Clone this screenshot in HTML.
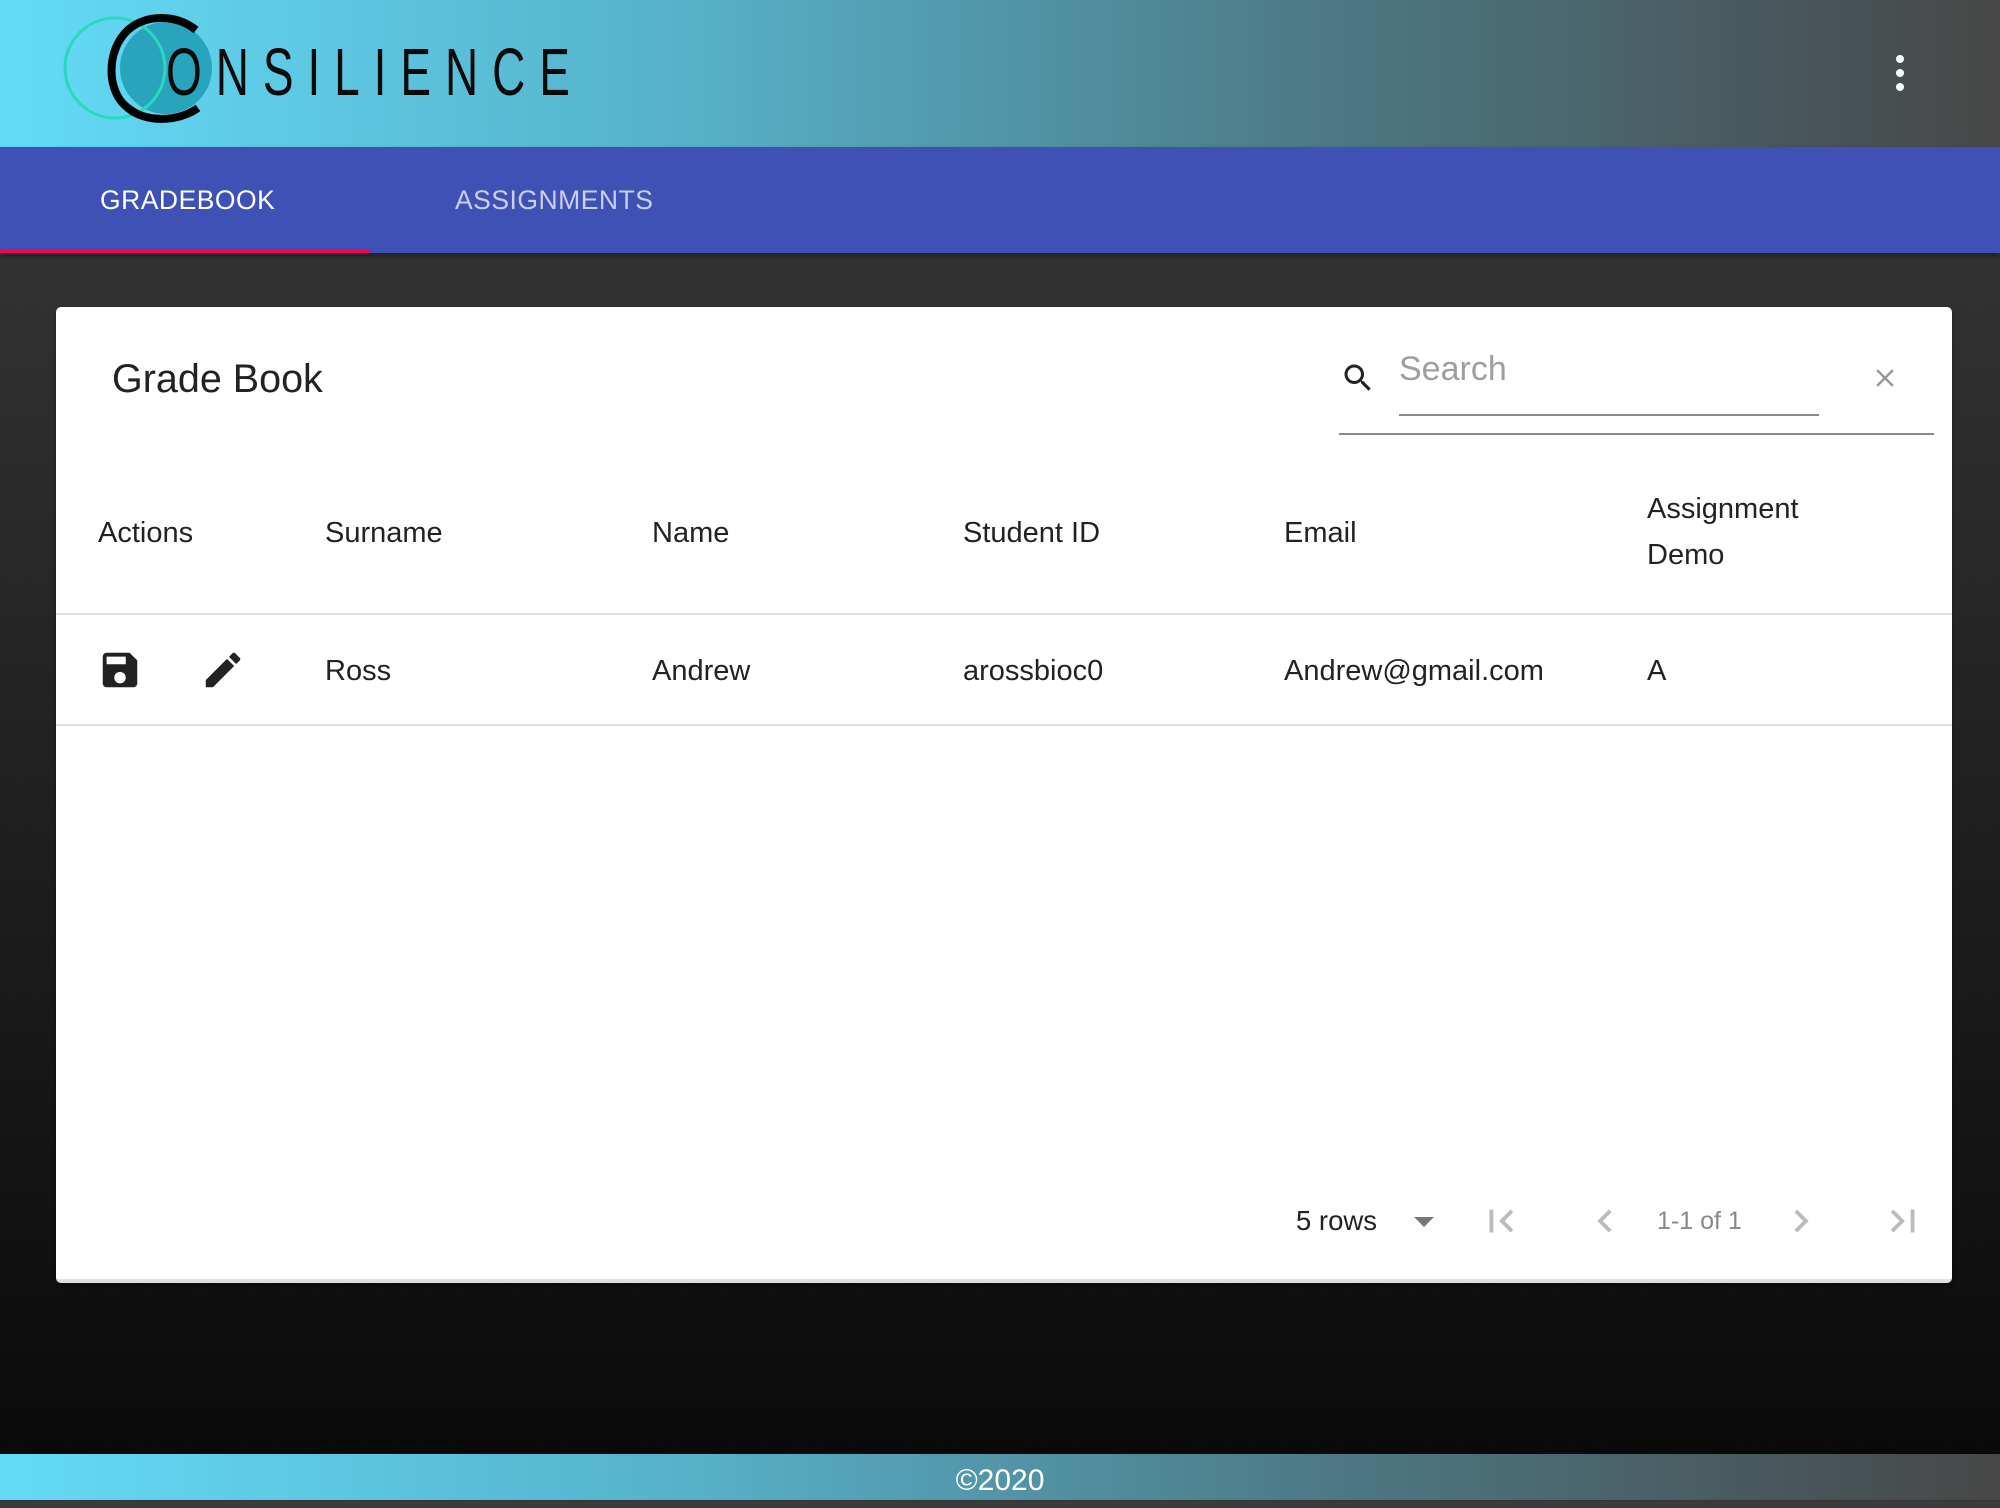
<!DOCTYPE html>
<html><head><style>
*{margin:0;padding:0;box-sizing:border-box}
body{width:2000px;height:1500px;overflow:hidden;font-family:"Liberation Sans",sans-serif;background:linear-gradient(#3b3b3b,#0a0a0a 1454px);position:relative}
.hdr{position:absolute;left:0;top:0;width:2000px;height:147px;background:linear-gradient(90deg,#63dbf7 0%,#56b0c8 35%,#4d7b87 65%,#474747 100%)}
.tabs{position:absolute;left:0;top:147px;width:2000px;height:106px;background:#3f51b5;box-shadow:0 3px 5px rgba(0,0,0,.4)}
.tab{position:absolute;top:0;height:106px;line-height:106px;font-size:26.5px;letter-spacing:.5px;font-weight:500}
.ind{position:absolute;left:0;top:249px;width:370px;height:4px;background:#f50057}
.card{position:absolute;left:56px;top:307px;width:1896px;height:976px;background:#fff;border-radius:5px;border-bottom:4px solid #e0e0e0;box-shadow:0 2px 4px rgba(0,0,0,.4)}
.t{position:absolute;color:#222;font-size:29px;white-space:nowrap}
.hl{position:absolute;left:0;width:1896px;height:2px;background:#e0e0e0}
.foot{position:absolute;left:0;top:1454px;width:2000px;height:46px;background:linear-gradient(90deg,#63dbf7 0%,#56b0c8 35%,#4d7b87 65%,#474747 100%);color:#fff;font-size:30px;text-align:center;line-height:54px}
</style></head><body>
<div class="hdr">
<svg width="640" height="147" style="position:absolute;left:0;top:0">
<circle cx="166" cy="68" r="46" fill="#29a4bd"/>
<ellipse cx="115" cy="68" rx="50" ry="50" fill="none" stroke="#2ad7c0" stroke-width="3"/>
<path d="M196 30 C176 14 146 14 128 30 C106 50 106 92 128 108 C146 123 178 122 198 108" fill="none" stroke="#000" stroke-width="8"/>
<g transform="translate(0,95) scale(1,1.45)">
<text x="166" y="0" font-family="Liberation Sans" font-size="46" textLength="404" lengthAdjust="spacing" fill="#0a0a0a">ONSILIENCE</text>
</g>
</svg>
<svg width="12" height="40" style="position:absolute;left:1894px;top:54px"><circle cx="6" cy="5" r="4" fill="#fff"/><circle cx="6" cy="19" r="4" fill="#fff"/><circle cx="6" cy="33" r="4" fill="#fff"/></svg>
</div>
<div class="tabs">
<div class="tab" style="left:100px;color:#fff">GRADEBOOK</div>
<div class="tab" style="left:455px;color:rgba(255,255,255,.72)">ASSIGNMENTS</div>
</div>
<div class="ind"></div>
<div class="card">
<div class="t" style="left:56px;top:50px;font-size:39.5px">Grade Book</div>
<svg width="36" height="36" viewBox="0 0 24 24" style="position:absolute;left:1284px;top:53px"><path fill="#222" d="M15.5 14h-.79l-.28-.27A6.47 6.470 0 0 0 16 9.5 6.5 6.5 0 1 0 9.5 16c1.61 0 3.09-.59 4.230-1.57l.27.28v.79l5 4.99L20.49 19l-4.99-5zm-6 0C7.010 14 5 11.99 5 9.5S7.01 5 9.5 5 14 7.01 14 9.5 11.99 14 9.5 14z"/></svg>
<div class="t" style="left:1343px;top:43px;font-size:34px;color:#9e9e9e">Search</div>
<div style="position:absolute;left:1343px;top:107px;width:420px;height:2px;background:#8a8a8a"></div>
<div style="position:absolute;left:1283px;top:126px;width:595px;height:2px;background:#8a8a8a"></div>
<svg width="30" height="30" viewBox="0 0 24 24" style="position:absolute;left:1814px;top:56px"><path fill="#999" d="M19 6.41L17.59 5 12 10.59 6.41 5 5 6.41 10.59 12 5 17.59 6.41 19 12 13.41 17.59 19 19 17.59 13.41 12z"/></svg>
<div class="t" style="left:42px;top:210px">Actions</div>
<div class="t" style="left:269px;top:210px">Surname</div>
<div class="t" style="left:596px;top:210px">Name</div>
<div class="t" style="left:907px;top:210px">Student ID</div>
<div class="t" style="left:1228px;top:210px">Email</div>
<div class="t" style="left:1591px;top:186px">Assignment</div>
<div class="t" style="left:1591px;top:232px">Demo</div>
<div class="hl" style="top:306px"></div>
<svg width="46" height="46" viewBox="0 0 24 24" style="position:absolute;left:41px;top:340px"><path fill="#222" d="M17 3H5a2 2 0 0 0-2 2v14a2 2 0 0 0 2 2h14c1.1 0 2-.9 2-2V7l-4-4zm-5 16c-1.66 0-3-1.34-3-3s1.34-3 3-3 3 1.34 3 3-1.34 3-3 3zm3-10H5V5h10v4z"/></svg>
<svg width="46" height="46" viewBox="0 0 24 24" style="position:absolute;left:144px;top:340px"><path fill="#222" d="M3 17.25V21h3.75L17.81 9.94l-3.75-3.75L3 17.25zM20.71 7.04a1 1 0 0 0 0-1.41l-2.34-2.34a1 1 0 0 0-1.41 0l-1.83 1.83 3.75 3.75 1.83-1.830z"/></svg>
<div class="t" style="left:269px;top:348px">Ross</div>
<div class="t" style="left:596px;top:348px">Andrew</div>
<div class="t" style="left:907px;top:348px">arossbioc0</div>
<div class="t" style="left:1228px;top:348px">Andrew@gmail.com</div>
<div class="t" style="left:1591px;top:348px">A</div>
<div class="hl" style="top:417px"></div>
<div class="t" style="left:1240px;top:898px;font-size:27.5px">5 rows</div>
<svg width="24" height="14" style="position:absolute;left:1356px;top:908px"><path d="M2 2h20l-10 10z" fill="#777"/></svg>
<svg width="46" height="46" viewBox="0 0 24 24" style="position:absolute;left:1422px;top:891px"><path fill="#bbb" d="M18.41 16.59L13.82 12l4.59-4.59L17 6l-6 6 6 6zM6 6h2v12H6z"/></svg>
<svg width="46" height="46" viewBox="0 0 24 24" style="position:absolute;left:1526px;top:891px"><path fill="#bbb" d="M15.41 7.41L14 6l-6 6 6 6 1.41-1.41L10.83 12z"/></svg>
<div class="t" style="left:1601px;top:900px;color:#888;font-size:25px">1-1 of 1</div>
<svg width="46" height="46" viewBox="0 0 24 24" style="position:absolute;left:1722px;top:891px"><path fill="#bbb" d="M10 6L8.59 7.41 13.17 12l-4.58 4.59L10 18l6-6z"/></svg>
<svg width="46" height="46" viewBox="0 0 24 24" style="position:absolute;left:1824px;top:891px"><path fill="#bbb" d="M5.59 7.41L10.18 12l-4.59 4.59L7 18l6-6-6-6zM16 6h2v12h-2z"/></svg>
</div>
<div class="foot">©2020</div>
</body></html>
